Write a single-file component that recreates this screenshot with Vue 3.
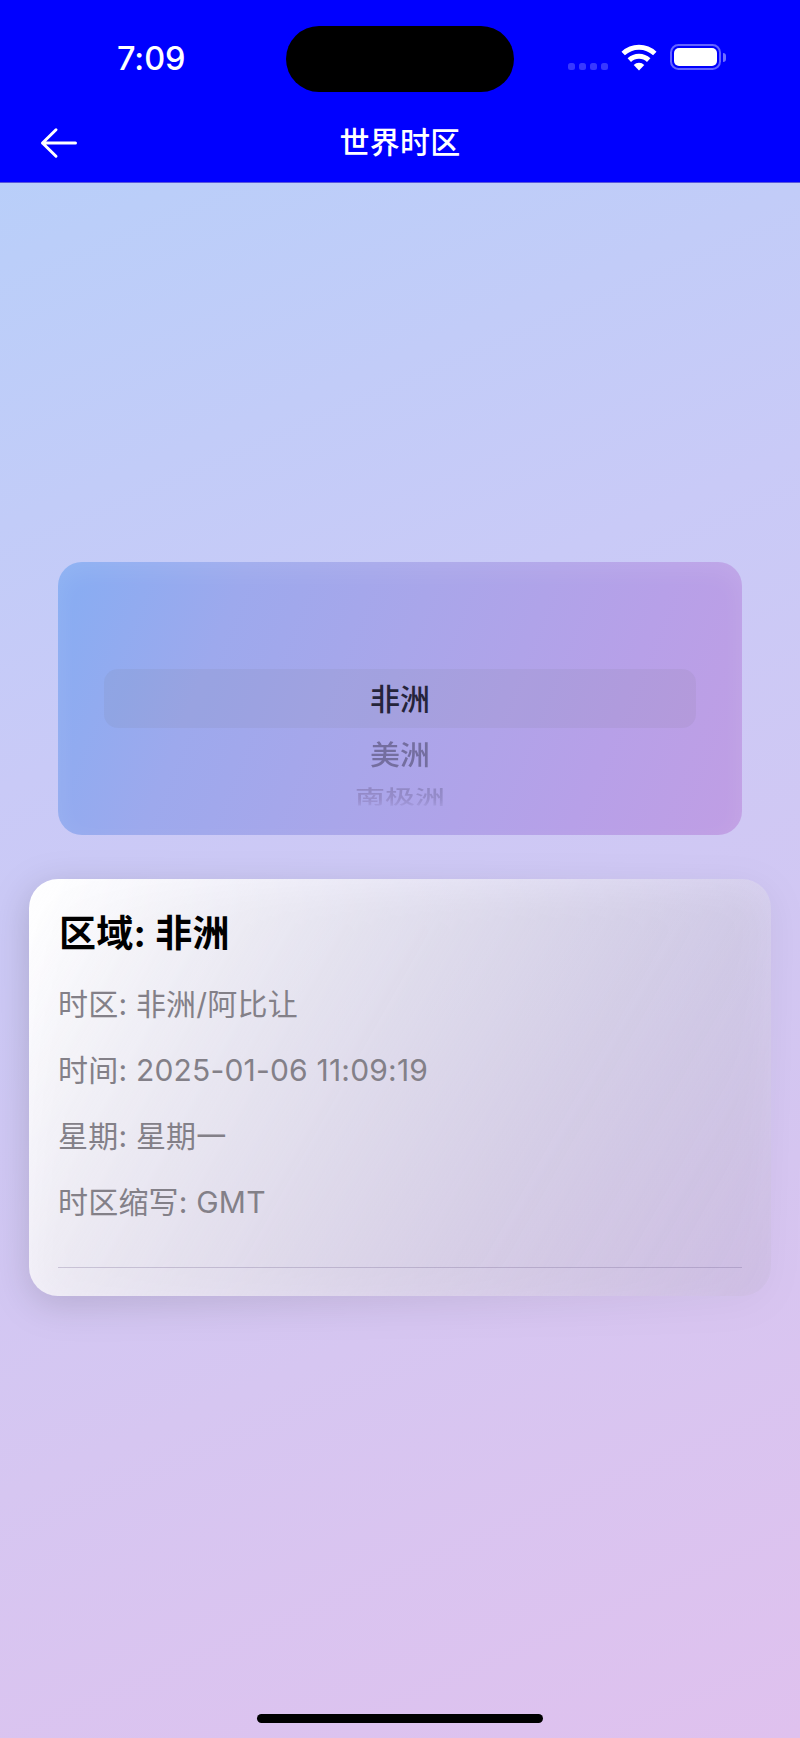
<template>
  <div class="screen">
    <header class="header">
      <div class="status-bar">
        <span class="clock">7:09</span>
        <div class="island"></div>
        <div class="indicators">
          <div class="cellular">
            <i v-for="n in 4" :key="n"></i>
          </div>
          <svg class="wifi" viewBox="0 0 36 27" width="36" height="27">
            <g fill="none" stroke="#fff" stroke-width="5">
              <path d="M2.2 9.5a23 23 0 0 1 31.6 0" />
              <path d="M8.3 16.2a14.2 14.2 0 0 1 19.4 0" />
            </g>
            <path d="M18 26.4l-5.3-5.4a7.6 7.6 0 0 1 10.6 0z" fill="#fff" />
          </svg>
          <div class="battery">
            <div class="battery-body">
              <div class="battery-level"></div>
            </div>
            <div class="battery-cap"></div>
          </div>
        </div>
      </div>
      <nav class="nav-bar">
        <svg class="back" viewBox="0 0 38 32" width="38" height="32">
          <path
            d="M35.5 16H2.5M16 2.8L2.5 16L16 29.2"
            fill="none"
            stroke="#fff"
            stroke-width="3"
            stroke-linecap="round"
            stroke-linejoin="round"
          />
        </svg>
        <h1 class="title">世界时区</h1>
      </nav>
    </header>

    <main class="content">
      <section class="picker">
        <div class="picker-row selected">{{ regions[0] }}</div>
        <div class="picker-row next">{{ regions[1] }}</div>
        <div class="picker-row last">{{ regions[2] }}</div>
      </section>

      <section class="card">
        <h2 class="card-title">区域: {{ regions[0] }}</h2>
        <p v-for="item in details" :key="item.label" class="card-row">{{ item.label }}: {{ item.value }}</p>
        <div class="divider"></div>
      </section>
    </main>

    <div class="home-indicator"></div>
  </div>
</template>

<script setup>
const regions = ['非洲', '美洲', '南极洲']

const details = [
  { label: '时区', value: '非洲/阿比让' },
  { label: '时间', value: '2025-01-06 11:09:19' },
  { label: '星期', value: '星期一' },
  { label: '时区缩写', value: 'GMT' }
]
</script>

<style>
body {
  margin: 0;
}
</style>

<style scoped>
.screen {
  display: flex;
  flex-direction: column;
  width: 800px;
  height: 1738px;
  overflow: hidden;
  font-family: Inter, "Noto Sans CJK SC", sans-serif;
  background: linear-gradient(157deg, #b4d0fa 0%, #c9caf7 38%, #d6c6f1 72%, #dfc1ee 100%);
}

.header {
  height: 182px;
  background: #0000ff;
  border-bottom: 1px solid #5656dc;
  color: #fff;
}

.status-bar {
  display: grid;
  grid-template-columns: 286px 228px 286px;
  height: 104px;
  padding-top: 12px;
  box-sizing: border-box;
  align-items: center;
}

.clock {
  padding-left: 117px;
  margin-top: 1px;
  font-size: 32.5px;
  font-weight: 550;
  line-height: 40px;
  letter-spacing: -0.1px;
}

.island {
  height: 66px;
  margin-top: 1px;
  border-radius: 33px;
  background: #000;
}

.indicators {
  display: flex;
  align-items: center;
  padding-left: 54px;
  height: 27px;
  margin-top: -2px;
}

.cellular {
  display: flex;
  gap: 4px;
  margin-top: 18px;
}

.cellular i {
  width: 7px;
  height: 7px;
  border-radius: 2.5px;
  background: #3838ff;
}

.wifi {
  margin-left: 13px;
}

.battery {
  display: flex;
  align-items: center;
  gap: 2px;
  margin-left: 13px;
}

.battery-body {
  width: 51px;
  height: 26px;
  box-sizing: border-box;
  padding: 2px;
  border: 2px solid #6464ff;
  border-radius: 8.5px;
}

.battery-level {
  height: 18px;
  border-radius: 5px;
  background: #fff;
}

.battery-cap {
  width: 3px;
  height: 9px;
  border-radius: 0 4px 4px 0;
  background: #7070ff;
}

.nav-bar {
  display: grid;
  grid-template-columns: 120px 1fr 120px;
  align-items: center;
  height: 78px;
}

.back {
  margin: 0 0 0 40px;
}

.title {
  margin: -2px 0 0;
  font-size: 30px;
  font-weight: 500;
  line-height: 44px;
  letter-spacing: 0.2px;
  text-align: center;
}

.content {
  flex: 1;
  padding: 379px 29px 0;
}

.picker {
  height: 273px;
  margin: 0 29px;
  padding: 107px 46px 0;
  box-sizing: border-box;
  border-radius: 24px;
  background: linear-gradient(111.8deg, #86adf3 0%, #9da9ed 24%, #a9a6ea 48%, #b7a0e8 78%, #c09ee4 100%);
  box-shadow: inset 0 8px 24px rgba(255, 255, 255, 0.1);
  overflow: hidden;
}

.picker-row {
  font-size: 30px;
  text-align: center;
  font-weight: 500;
}

.selected {
  height: 59px;
  line-height: 61px;
  border-radius: 14px;
  background: rgba(116, 116, 128, 0.1);
  color: #25243a;
}

.next {
  height: 50px;
  line-height: 54px;
  color: #746e9f;
  transform: scaleY(0.92);
}

/* bottom of the wheel: squashed and fading out */
.last {
  height: 40px;
  line-height: 36px;
  background: linear-gradient(#8f86c2, #978dcc 55%, rgba(160, 150, 215, 0.5) 88%);
  background-clip: text;
  color: transparent;
  transform: scaleY(0.66);
}

.card {
  position: relative;
  height: 417px;
  margin-top: 44px;
  padding: 31px 29px 0;
  box-sizing: border-box;
}

.card::before {
  content: "";
  position: absolute;
  inset: 0;
  border-radius: 29px;
  background: linear-gradient(119.3deg, #fff, rgba(165, 160, 172, 0.12));
  filter: drop-shadow(0 9px 18px rgba(0, 0, 0, 0.18));
}

.card-title,
.card-row,
.divider {
  position: relative;
}

.card-title {
  margin: 0 0 24px;
  padding-left: 1px;
  font-size: 37px;
  font-weight: 700;
  line-height: 48px;
  letter-spacing: 0.3px;
  color: #000;
}

.card-row {
  margin: 0 0 22px;
  font-size: 30px;
  line-height: 44px;
  letter-spacing: 0.2px;
  color: #838088;
}

.divider {
  height: 1px;
  margin-top: 43px;
  background: rgba(100, 85, 130, 0.26);
}

.home-indicator {
  width: 286px;
  height: 9px;
  margin: 0 auto 15px;
  border-radius: 5px;
  background: #000;
}
</style>
